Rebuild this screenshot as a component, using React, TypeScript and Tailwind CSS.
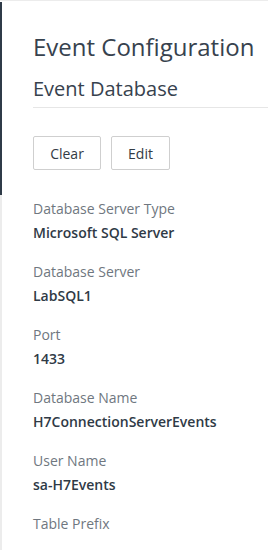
import React from 'react';

const fields: { label: string; value: string }[] = [
  { label: 'Database Server Type', value: 'Microsoft SQL Server' },
  { label: 'Database Server', value: 'LabSQL1' },
  { label: 'Port', value: '1433' },
  { label: 'Database Name', value: 'H7ConnectionServerEvents' },
  { label: 'User Name', value: 'sa-H7Events' },
  { label: 'Table Prefix', value: '' },
];

export default function App() {
  return (
    <div className="w-[268px] h-[550px] overflow-hidden bg-white border-t border-[#ececec] flex font-['Open_Sans',sans-serif]">
      {/* Left rail */}
      <div className="w-[2px] flex flex-col pt-[1px]">
        <div className="h-[193px] bg-[#2f3b48]" />
        <div className="flex-1 bg-[#ececec]" />
      </div>

      <main className="flex-1 pl-[31px] pt-[30px]">
        <h1 className="text-[24px] leading-[32px] text-[#37424e]">Event Configuration</h1>
        <h2 className="mt-[12px] text-[20px] leading-[28px] text-[#37424e]">Event Database</h2>
        <div className="mt-[4px] h-px bg-[#e6e6e6]" />

        <div className="mt-[28px] flex gap-[10px]">
          <button className="h-[34px] w-[68px] border border-[#cfcfcf] rounded-[2px] text-[14px] text-[#333b45]">
            Clear
          </button>
          <button className="h-[34px] w-[59px] border border-[#cfcfcf] rounded-[2px] text-[14px] text-[#333b45]">
            Edit
          </button>
        </div>

        <div className="mt-[28px] flex flex-col">
          {fields.map((f) => (
            <div key={f.label} className="h-[63px]">
              <div className="text-[14px] leading-[22px] text-[#6f7780]">{f.label}</div>
              <div className="mt-[2px] text-[14px] leading-[22px] font-semibold text-[#2f3a46]">{f.value}</div>
            </div>
          ))}
        </div>
      </main>
    </div>
  );
}
